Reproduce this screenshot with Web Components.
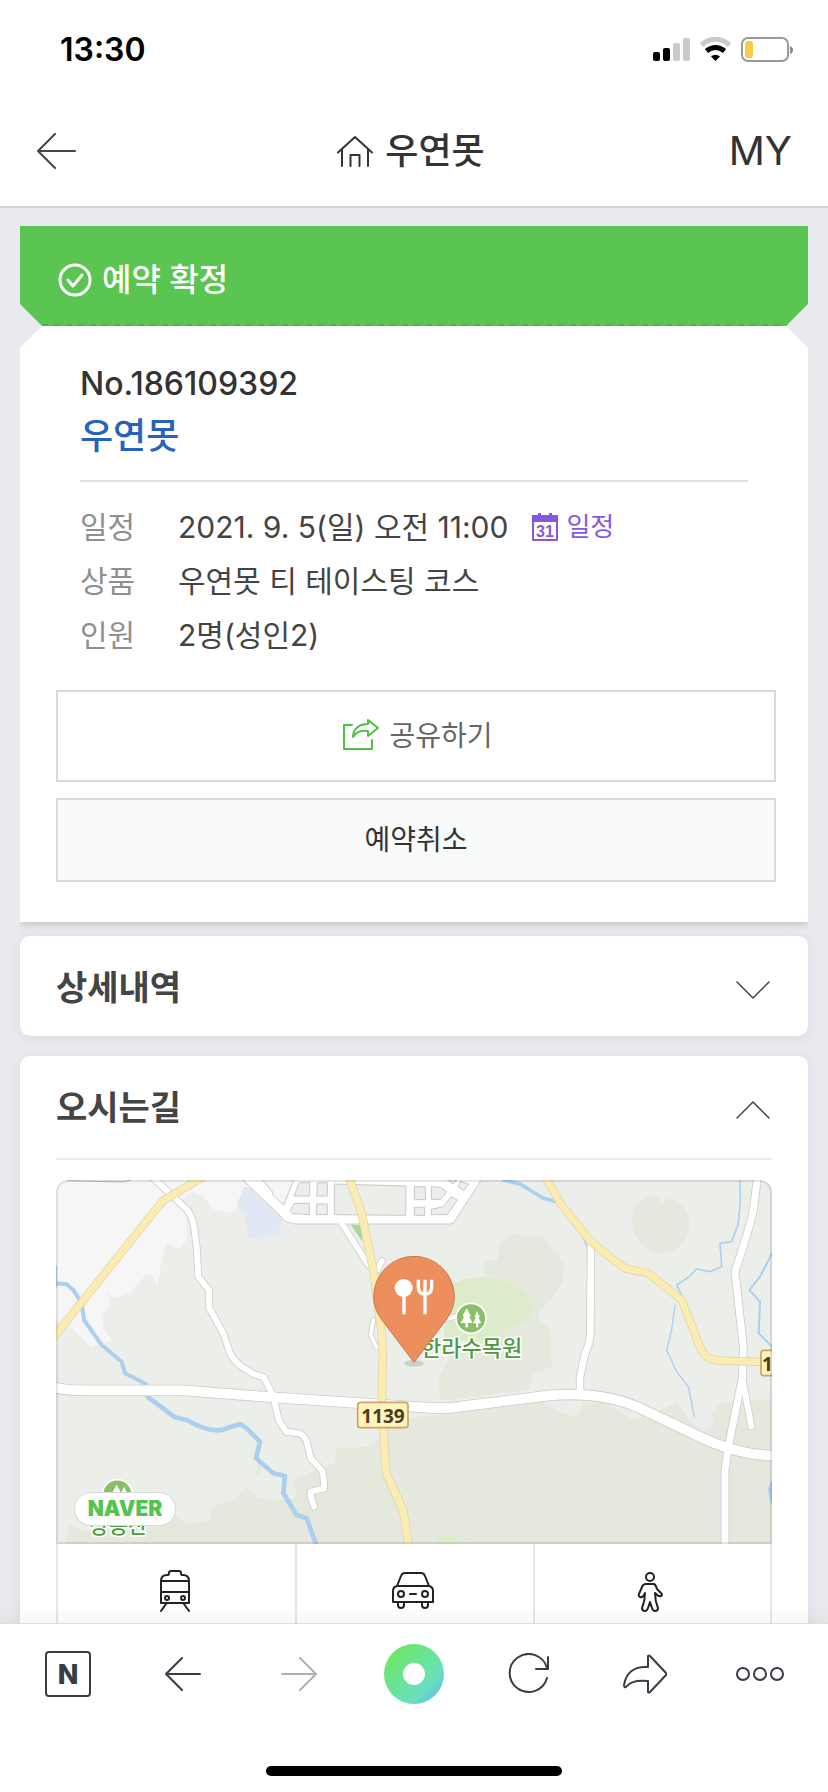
<!DOCTYPE html>
<html lang="ko">
<head>
<meta charset="utf-8">
<meta name="viewport" content="width=device-width, initial-scale=1">
<title>우연못 예약 확정</title>
<style>
  html, body {
    height: 100%;
    margin: 0;
  }

  body {
    background: #e9eaee;
    color: #333;
    font-family: Inter, "Noto Sans CJK KR", sans-serif;
  }
</style>
</head>
<body>
<booking-app>
  <status-bar slot="top" time="13:30"></status-bar>
  <page-header slot="top">우연못</page-header>

  <booking-ticket number="186109392">
    <span slot="status">예약 확정</span>
    <a slot="name" href="#place">우연못</a>
    <info-row label="일정">2021. 9. 5(일) 오전 11:00 <calendar-link slot="extra">일정</calendar-link></info-row>
    <info-row label="상품">우연못 티 테이스팅 코스</info-row>
    <info-row label="인원">2명(성인2)</info-row>
    <action-button slot="actions" icon="share">공유하기</action-button>
    <action-button slot="actions" muted>예약취소</action-button>
  </booking-ticket>

  <fold-card title-text="상세내역"></fold-card>
  <fold-card title-text="오시는길" opened>
    <place-map></place-map>
    <route-tabs></route-tabs>
  </fold-card>

  <browser-bar slot="bottom"></browser-bar>
</booking-app>

<script>
const ICONS = {
  arrow: ['0 0 40 36', '<path d="M39 18H2M19 1 2 18l17 17"/>'],
  home: ['0 0 36 32', '<path d="M1 17.500 18 2l17 15.500M5 14v17M31 14v17M13.500 31V20h9v11"/>'],
  check: ['0 0 34 34', '<g stroke-width="3"><circle cx="17" cy="17" r="15"/><path d="m10 17 5 6 9-11"/></g>'],
  calendar: ['0 0 26 28', '<path d="M1 3h24v24H1z"/><path d="M0 2h26v7H0zM6 0h3v3H6zM17 0h3v3h-3z" fill="currentColor" stroke="none"/><text x="13" y="24" text-anchor="middle" font-family="Liberation Sans" font-size="16" font-weight="700" fill="currentColor" stroke="none">31</text>'],
  share: ['0 0 36 32', '<path d="M9 7H1v24h28V22M25 2l10 8-10 8v-5c-7-1-12 1-15 6 0-7 5-13 15-13z"/>'],
  chevron: ['0 0 34 20', '<path d="m1 2 16 16L33 2" stroke-width="1.500"/>'],
  train: ['0 0 30 42', '<path d="M1 33V11q0-6 6-6h1q1 0 1-2t2-2h8q2 0 2 2t1 2h1q6 0 6 6v22zM1 11h28M1 22h28M6 34l-5 7M24 34l5 7"/><circle cx="7" cy="28" r="2"/><circle cx="23" cy="28" r="2"/>'],
  car: ['0 0 42 40', '<path d="M5 14 9 4q1-3 4-3h16q3 0 4 3l4 10q4 1 4 5v11H1V19q0-4 4-5zM5 14h32M18 22h6"/><circle cx="9" cy="22" r="3"/><circle cx="33" cy="22" r="3"/><path d="M6 31v2a3 3 0 0 0 6 0v-2M30 31v2a3 3 0 0 0 6 0v-2"/>'],
  walk: ['0 0 26 40', '<circle cx="13" cy="5" r="4"/><path d="M9 12h8q2 1 3 5l4 4q2 2 0 3-2 1-5-2l-1-1q0 8 3 15 0 3-3 3-2 0-3-3l-2-6-2 6q-1 3-3 3-3 0-3-3 3-7 3-15l-1 2q-2 3-4 2t-1-3l3-7q1-3 4-3z"/>'],
  naver: ['0 0 46 46', '<rect x="1" y="1" width="44" height="44" rx="3"/><text x="23" y="33" text-anchor="middle" font-size="27" font-weight="800" fill="currentColor" stroke="none">N</text>'],
  forward: ['0 0 36 36', '<path d="M1 18h33M19 2l16 16-16 16"/>'],
  back: ['0 0 36 36', '<path d="M35 18H2M17 2 1 18l16 16"/>'],
  reload: ['0 0 42 42', '<path d="M39 25A19 19 0 1 1 39 15M40 4v12H28"/>'],
  send: ['0 0 44 40', '<path d="M25 2q1-1 2 0l16 17q1 1 0 2L27 38q-1 1-2 0V27C15 26 8 27 4 32q-3 3-3-1C3 19 11 12 25 13z"/>'],
  more: ['0 0 50 16', '<circle cx="8" cy="8" r="6"/><circle cx="25" cy="8" r="6"/><circle cx="42" cy="8" r="6"/>']
};

// Map coordinates are three units per pixel.
const WATER = [
  ['M48 340 80 343 100 360 125 400 132 450 185 525 245 575 255 610 318 642', 12],
  ['M48 290V350', 6],
  ['M322 680 405 742 440 750Q520 795 560 775L600 762 620 775 660 815 648 865 700 910 735 918 730 970 770 1035 800 1045 828 1122', 14],
  ['M1390 30 1440 42 1510 85 1550 95', 11],
  ['M2100 30 2101 90 2095 160 2075 215 2040 220 2045 290 2010 305 1970 297 1948 320 1910 345 1925 375', 5],
  ['M1905 405 1895 480 1880 540 1910 605 1945 650 1963 740', 4],
  ['M2196 250 2160 320 2128 360 2160 395 2156 490 2196 530', 6],
  ['M1620 180 1640 230', 4],
  ['M2196 940 2190 960 2196 995', 12]
];

const ROADS = [
  ['M620 20 745 140', 28],
  ['M655 30 688 68', 16],
  ['M905 160 985 285M1012 300 1026 272', 17],
  ['M1000 450 992 495 1010 532', 12],
  ['M1200 450 1255 438', 14],
  ['M1653 215 1651 490Q1650 520 1635 550L1620 620V665', 20],
  ['M340 24 440 118Q455 135 462 170L470 230 475 320 507 360 508 415 550 490 570 550Q580 570 605 590L640 612 672 622 700 680 716 750 738 785 775 790Q790 792 800 815L812 865 845 900Q852 910 852 955L812 965V978L822 1010', 18],
  ['M2110 640 2134 770', 18],
  ['M2152 26 2140 120Q2130 170 2085 305L2110 530 2108 620 2065 830 2055 900V1130', 21],
  ['M40 652Q80 662 150 661L430 661 700 682 1150 712Q1210 718 1260 710L1530 676Q1680 664 1790 710L1990 805Q2060 838 2140 852L2206 858', 29]
];

const HIGHWAYS = [
  ['M485 24 375 88Q365 95 360 103L40 503', 20],
  ['M928 24 965 130 1000 300 1024 480Q1030 540 1027 600L1026 700 1038 910 1085 1010Q1095 1035 1105 1130', 21],
  ['M1515 20 1565 105 1640 200Q1660 225 1755 295L1825 310 1925 390 1980 530Q1995 570 2040 572L2175 576', 20]
];

const BLOCKS = [
  'M778 38H810L808 78H762z', 'M832 38H862V78H830z', 'M762 100H808V134L748 130z',
  'M830 102H862V134H828z', 'M883 42 1098 48 1097 136 883 134z', 'M1123 50H1156V89H1123z',
  'M1123 112H1154V136H1123z', 'M1174 50 1202 52 1220 66 1202 88H1174z',
  'M1174 134V118L1210 110 1234 80 1252 90 1222 134z', 'M1262 34 1286 42 1272 62 1255 50z',
  'M1222 30H1250L1240 42z'
];

const stroke = (list, color, extra = 0) => list
  .map(([d, width]) => `<path d="${d}" stroke="${color}" stroke-width="${width + extra}"/>`)
  .join('');

class AppIcon extends HTMLElement {
  constructor() {
    super();

    this.attachShadow({ mode: 'open' });
  }

  connectedCallback() {
    const [viewBox, shapes] = ICONS[this.getAttribute('name')];
    const [, , width, height] = viewBox.split(' ');

    this.shadowRoot.innerHTML = `
      <style>
        :host {
          display: block;
          flex: none;
        }

        svg {
          display: block;
          fill: none;
          font-family: Inter, sans-serif;
          stroke: currentColor;
          stroke-linecap: round;
          stroke-linejoin: round;
          stroke-width: 2;
        }
      </style>
      <svg viewBox="${viewBox}" width="${width}" height="${height}" aria-hidden="true">${shapes}</svg>
    `;
  }
}

class BookingApp extends HTMLElement {
  constructor() {
    super();

    this.attachShadow({ mode: 'open' }).innerHTML = `
      <style>
        :host {
          display: flex;
          flex-direction: column;
          height: 100vh;
        }

        main {
          display: flex;
          flex: 1;
          flex-direction: column;
          gap: 20px;
          min-height: 0;
          overflow-y: auto;
          padding: 18px 20px;
          scrollbar-width: none;
        }
      </style>
      <slot name="top"></slot>
      <main><slot></slot></main>
      <slot name="bottom"></slot>
    `;
  }
}

class StatusBar extends HTMLElement {
  constructor() {
    super();

    this.attachShadow({ mode: 'open' });
  }

  connectedCallback() {
    this.shadowRoot.innerHTML = `
      <style>
        :host {
          align-items: center;
          background: #fff;
          box-sizing: border-box;
          color: #000;
          display: flex;
          flex: none;
          height: 100px;
          justify-content: space-between;
          padding: 0 34px 0 60px;
        }

        time {
          font-size: 32px;
          font-weight: 600;
          line-height: 40px;
        }

        svg {
          display: block;
        }
      </style>
      <time>${this.getAttribute('time')}</time>
      <svg width="142" height="26" viewBox="0 0 142 26" aria-hidden="true">
        <rect x="1" y="15" width="7" height="9" rx="2"/>
        <rect x="11" y="11" width="7" height="13" rx="2"/>
        <rect x="21" y="6" width="7" height="18" rx="2" fill="#cacaca"/>
        <rect x="31" y="1" width="7" height="23" rx="2" fill="#cacaca"/>
        <path d="M49.500 8Q63.500-3.500 77.500 8" fill="none" stroke="#cacaca" stroke-width="5"/>
        <path d="M54.500 14Q63.500 7 72.500 14" fill="none" stroke="#000" stroke-width="5"/>
        <path d="M59 19.500Q63.500 16 68 19.500L63.500 24z"/>
        <rect x="90" y="1" width="46" height="23" rx="6" fill="none" stroke="#999" stroke-width="2"/>
        <rect x="93" y="4" width="8" height="17" rx="3" fill="#f8cd45"/>
        <path d="M138 9q3 1 3 4t-3 4z" fill="#888"/>
      </svg>
    `;
  }
}

class PageHeader extends HTMLElement {
  constructor() {
    super();

    this.attachShadow({ mode: 'open' }).innerHTML = `
      <style>
        :host {
          align-items: center;
          background: #fff;
          border-bottom: 2px solid #d2d3d7;
          box-sizing: border-box;
          display: grid;
          flex: none;
          grid-template-columns: 1fr auto 1fr;
          height: 108px;
          padding: 0 36px 4px;
        }

        button {
          background: none;
          border: 0;
          color: #444;
          justify-self: start;
          padding: 0;
        }

        h1 {
          align-items: center;
          display: flex;
          font-size: 36px;
          font-weight: 500;
          gap: 12px;
          line-height: 48px;
          margin: 0 6px 0 0;
        }

        a {
          color: #333;
          font-size: 40px;
          font-weight: 400;
          justify-self: end;
          line-height: 48px;
          text-decoration: none;
        }
      </style>
      <button type="button" aria-label="뒤로"><app-icon name="arrow"></app-icon></button>
      <h1><app-icon name="home"></app-icon><slot></slot></h1>
      <a href="#my">MY</a>
    `;
  }
}

class BookingTicket extends HTMLElement {
  constructor() {
    super();

    this.attachShadow({ mode: 'open' });
  }

  connectedCallback() {
    this.shadowRoot.innerHTML = `
      <style>
        :host {
          display: block;
          flex: none;
          margin-bottom: -6px;
        }

        #banner {
          align-items: center;
          background:
            repeating-linear-gradient(90deg, #52b04c 0 6px, transparent 6px 12px) 22px 100% / 100% 2px no-repeat,
            #5ac551;
          box-sizing: border-box;
          clip-path: polygon(0 0, 100% 0, 100% calc(100% - 22px), calc(100% - 22px) 100%, 22px 100%, 0 calc(100% - 22px));
          color: #fff;
          display: flex;
          font-size: 32px;
          font-weight: 500;
          gap: 10px;
          height: 100px;
          line-height: 48px;
          padding: 8px 38px 0;
        }

        #body {
          background: #fff;
          box-shadow: 0 2px 8px rgba(0, 0, 0, .18);
          clip-path: polygon(22px 0, calc(100% - 22px) 0, 100% 22px, 100% calc(100% + 12px), 0 calc(100% + 12px), 0 22px);
          padding: 32px 0 40px;
        }

        #summary {
          border-bottom: 2px solid #e0e0e0;
          line-height: 52px;
          margin: 0 60px 18px;
          padding-bottom: 18px;
        }

        #number {
          font-size: 32px;
          font-weight: 500;
          margin: 0;
        }

        #name {
          font-size: 36px;
          font-weight: 500;
          margin: 0;
        }

        ::slotted(a) {
          color: #2862bd;
          text-decoration: none;
        }

        #rows {
          margin: 0 60px;
        }

        #actions {
          display: flex;
          flex-direction: column;
          gap: 16px;
          margin: 28px 32px 0 36px;
        }
      </style>
      <div id="banner"><app-icon name="check"></app-icon><slot name="status"></slot></div>
      <div id="body">
        <div id="summary">
          <p id="number">No.${this.getAttribute('number')}</p>
          <h2 id="name"><slot name="name"></slot></h2>
        </div>
        <div id="rows"><slot></slot></div>
        <div id="actions"><slot name="actions"></slot></div>
      </div>
    `;
  }
}

class InfoRow extends HTMLElement {
  constructor() {
    super();

    this.attachShadow({ mode: 'open' });
  }

  connectedCallback() {
    this.shadowRoot.innerHTML = `
      <style>
        :host {
          color: #444;
          display: flex;
          font-size: 30px;
          line-height: 54px;
        }

        #label {
          color: #8f8f8f;
          flex: none;
          width: 98px;
        }

        #value {
          align-items: center;
          display: flex;
          gap: 24px;
        }
      </style>
      <span id="label">${this.getAttribute('label')}</span>
      <span id="value"><span><slot></slot></span><slot name="extra"></slot></span>
    `;
  }
}

class CalendarLink extends HTMLElement {
  constructor() {
    super();

    this.attachShadow({ mode: 'open' }).innerHTML = `
      <style>
        :host {
          display: block;
        }

        a {
          align-items: center;
          color: #8559df;
          display: flex;
          font-size: 26px;
          gap: 8px;
          text-decoration: none;
        }
      </style>
      <a href="#calendar"><app-icon name="calendar"></app-icon><slot></slot></a>
    `;
  }
}

class ActionButton extends HTMLElement {
  constructor() {
    super();

    this.attachShadow({ mode: 'open' });
  }

  connectedCallback() {
    const icon = this.getAttribute('icon');

    this.shadowRoot.innerHTML = `
      <style>
        :host {
          display: block;
        }

        button {
          align-items: center;
          background: #fff;
          border: 2px solid #d9dbdb;
          color: #666;
          display: flex;
          font: inherit;
          font-size: 28px;
          gap: 10px;
          height: 92px;
          justify-content: center;
          padding: 0 0 4px;
          width: 100%;
        }

        :host([icon]) button {
          padding-left: 4px;
        }

        :host([muted]) button {
          background: #f9fbfb;
          color: #333;
          height: 84px;
        }

        app-icon {
          color: #4fc043;
        }
      </style>
      <button type="button">${icon ? `<app-icon name="${icon}"></app-icon>` : ''}<slot></slot></button>
    `;
  }
}

class FoldCard extends HTMLElement {
  constructor() {
    super();

    this.attachShadow({ mode: 'open' });
  }

  connectedCallback() {
    this.shadowRoot.innerHTML = `
      <style>
        :host {
          background: #fff;
          border-radius: 10px;
          box-shadow: 0 2px 12px rgba(60, 60, 100, .07);
          display: block;
          flex: none;
          padding: 0 36px;
        }

        h2 {
          margin: 0;
        }

        button {
          align-items: center;
          background: none;
          border: 0;
          color: #444;
          display: flex;
          font: inherit;
          font-size: 34px;
          font-weight: 700;
          height: 100px;
          justify-content: space-between;
          line-height: 48px;
          padding: 4px 2px 0 0;
          width: 100%;
        }

        app-icon {
          padding-top: 4px;
        }

        #content {
          border-top: 2px solid #ebebeb;
          display: none;
          padding: 20px 0 36px;
        }

        :host([opened]) #content {
          display: block;
        }

        :host([opened]) h2 {
          padding-bottom: 2px;
        }

        :host([opened]) app-icon {
          padding: 0 0 4px;
          transform: rotate(180deg);
        }
      </style>
      <h2><button type="button" aria-expanded="${this.hasAttribute('opened')}">${this.getAttribute('title-text')}<app-icon name="chevron"></app-icon></button></h2>
      <div id="content"><slot></slot></div>
    `;

    this.shadowRoot.querySelector('button').addEventListener('click', this.toggle.bind(this));
  }

  toggle() {
    this.toggleAttribute('opened');
    this.shadowRoot.querySelector('button').setAttribute('aria-expanded', this.hasAttribute('opened'));
  }
}

class PlaceMap extends HTMLElement {
  constructor() {
    super();

    this.attachShadow({ mode: 'open' }).innerHTML = `
      <style>
        :host {
          aspect-ratio: 716 / 364;
          border-radius: 12px 12px 0 0;
          display: block;
          overflow: hidden;
          position: relative;
        }

        :host::after {
          border: 2px solid rgba(0, 0, 0, .1);
          border-radius: 12px 12px 0 0;
          content: '';
          inset: 0;
          pointer-events: none;
          position: absolute;
        }

        svg {
          display: block;
          height: 100%;
          width: 100%;
        }

        .label {
          fill: #4f9a40;
          font-family: "Noto Sans CJK KR", sans-serif;
          font-weight: 500;
          paint-order: stroke;
          stroke: #fff;
          stroke-width: 9px;
        }

        .shield {
          fill: #4e3c1a;
          font-family: "Open Sans", sans-serif;
          font-size: 57px;
          font-weight: 700;
        }

        #logo {
          background: #fff;
          border: 1px solid #d8d8d8;
          border-radius: 17px;
          bottom: 18px;
          box-sizing: border-box;
          color: #53c351;
          font-size: 21px;
          font-weight: 900;
          left: 18px;
          line-height: 32px;
          position: absolute;
          text-align: center;
          width: 102px;
        }
      </style>
      <svg viewBox="48 30 2148 1092" preserveAspectRatio="xMidYMid slice" role="img" aria-label="지도">
        <rect x="48" y="30" width="2148" height="1092" fill="#eceee9"/>
        <path fill="#f6f6f6" d="M48 30H760L720 110 600 100 570 130 520 118 485 75 455 65 425 92 440 150V210L420 237 378 220 365 270 352 352 335 315 318 314 270 370 225 385 200 370 210 400 188 440 190 475 215 510 155 532 95 475 48 450z"/>
        <path fill="#e0e8f3" d="M612 50 590 105 612 125 625 200 665 210 685 192 715 197 728 140 640 55z"/>
        <g fill="#e5e8dd">
          <path d="M75 1122 90 1065 140 1085 230 1055 400 1032 440 1062 510 1050 520 1010 580 990 620 950 650 980 700 992 770 985 760 930 850 890 885 880 890 835 1000 830 1030 780 1110 745 1500 690 1545 720 1610 745 1630 700 1700 700 1780 750 1910 700 1940 740 1990 790 2020 760 2016 730 2040 700 2196 686V1122z"/>
          <path d="M1380 218 1425 188 1440 200 1510 200 1540 240 1572 280 1568 340 1490 440 1532 480 1535 590 1480 610 1465 660 1200 692 1195 620 1230 560 1360 500 1360 320 1330 308 1335 272 1372 270z"/>
          <path d="M1778 125C1785 95 1820 75 1856 80L1862 105 1885 85C1940 90 1965 160 1935 210 1900 260 1850 255 1820 235 1780 205 1772 165 1778 125z"/>
          <path d="M650 860 665 900 650 920z"/>
        </g>
        <path fill="#dcebc9" d="M1225 350C1290 305 1410 310 1462 380L1478 415 1465 450 1400 480 1350 512H1210z"/>
        <path fill="#d9edc4" d="M1182 1122 1195 1105 1230 1097 1262 1115 1285 1122z"/>
        <path fill="#a9d79b" d="M932 164 962 166 968 215z"/>
        <path d="M80 32 250 36 275 29" fill="none" stroke="#bbb" stroke-width="3"/>
        <g fill="none" stroke-linecap="round" stroke-linejoin="round">
          ${stroke(WATER, '#abcfef')}
          ${stroke(ROADS, '#cdcdcd', 5)}
        </g>
        <path d="M725 122 765 20H1330L1245 152Q1240 162 1230 162H765Q740 158 725 148z" fill="#fff" stroke="#cdcdcd" stroke-width="3"/>
        <path d="${BLOCKS.join('')}" fill="#eceee9" stroke="#c8c8c8" stroke-width="3"/>
        <g fill="none" stroke-linecap="round" stroke-linejoin="round">
          ${stroke(ROADS, '#fff')}
          ${stroke(HIGHWAYS, '#e3d6a8', 5)}
          ${stroke(HIGHWAYS, '#faecb3')}
        </g>

        <rect x="953" y="697" width="151" height="76" rx="9" fill="#fdf3bd" stroke="#cda463" stroke-width="5"/>
        <text class="shield" x="1029" y="758" text-anchor="middle">1139</text>
        <rect x="2163" y="541" width="151" height="76" rx="9" fill="#fdf3bd" stroke="#cda463" stroke-width="5"/>
        <text class="shield" x="2166" y="602">1</text>

        <circle cx="1293" cy="445" r="45" fill="#89bf66" stroke="#fff" stroke-width="5"/>
        <path fill="#fff" d="m1280 415 13 24h-6l11 20h-14v13h-8v-13h-14l11-20h-6zM1311 424l9 18h-5l9 18h-9v12h-7v-12h-9l9-18h-5z"/>
        <text class="label" x="1143" y="559" font-size="66">한라수목원</text>
        <circle cx="232" cy="974" r="45" fill="#89bf66" stroke="#fff" stroke-width="5"/>
        <path fill="#fff" d="m230 944 22 40h-44zM252 950l16 30h-30z"/>
        <text class="label" x="235" y="1090" font-size="63" text-anchor="middle">상봉산</text>

        <ellipse cx="1122" cy="580" rx="30" ry="10" fill="#000" opacity=".13"/>
        <path d="M1122 577 1026 450C1010 428 1001 405 1001 380A121 121 0 0 1 1243 380C1243 405 1234 428 1218 450z" fill="#ed8f5d" stroke="#c9764a" stroke-width="3"/>
        <circle cx="1091" cy="354" r="27" fill="#fff"/>
        <path d="M1092 370V433M1155 329V433M1135 329V350Q1135 372 1155 372T1175 350V329" fill="none" stroke="#fff" stroke-width="10"/>
      </svg>
      <span id="logo">NAVER</span>
    `;
  }
}

class RouteTabs extends HTMLElement {
  constructor() {
    super();

    this.attachShadow({ mode: 'open' }).innerHTML = `
      <style>
        :host {
          border: solid #e6e6e6;
          border-width: 0 2px 2px;
          display: grid;
          grid-template-columns: repeat(3, 1fr);
        }

        button {
          align-items: end;
          background: #fff;
          border: 0;
          border-left: 2px solid #e6e6e6;
          color: #222;
          display: flex;
          height: 92px;
          justify-content: center;
          padding: 0 4px 24px 0;
        }

        button:first-of-type {
          border-left: 0;
        }
      </style>
      <button type="button" aria-label="대중교통"><app-icon name="train"></app-icon></button>
      <button type="button" aria-label="자동차"><app-icon name="car"></app-icon></button>
      <button type="button" aria-label="도보"><app-icon name="walk"></app-icon></button>
    `;
  }
}

class BrowserBar extends HTMLElement {
  constructor() {
    super();

    this.attachShadow({ mode: 'open' }).innerHTML = `
      <style>
        :host {
          background: #fff;
          border-top: 1px solid #dcdfe2;
          box-shadow: 0 -2px 20px rgba(40, 60, 60, .08);
          display: block;
          flex: none;
          padding: 0 10px 16px;
          position: relative;
        }

        nav {
          display: grid;
          grid-template-columns: repeat(7, 1fr);
          height: 100px;
        }

        button {
          align-items: center;
          background: none;
          border: 0;
          color: #363d45;
          display: flex;
          justify-content: center;
          padding: 0;
        }

        button:disabled {
          color: #b0b0b0;
        }

        #dot {
          background: linear-gradient(135deg, #6be66f 20%, #6ae0bd 70%, #5ac0ec 95%);
          border: 0;
          border-radius: 50%;
          display: grid;
          height: 60px;
          place-items: center;
          width: 60px;
        }

        #dot::before {
          background: #fff;
          border-radius: 50%;
          content: '';
          height: 22px;
          width: 22px;
        }

        #indicator {
          background: #000;
          border-radius: 5px;
          height: 10px;
          margin: 42px auto 0;
          width: 296px;
        }
      </style>
      <nav>
        <button type="button" aria-label="네이버 홈"><app-icon name="naver"></app-icon></button>
        <button type="button" aria-label="이전"><app-icon name="back"></app-icon></button>
        <button type="button" aria-label="다음" disabled><app-icon name="forward"></app-icon></button>
        <button type="button" aria-label="그린닷"><span id="dot"></span></button>
        <button type="button" aria-label="새로고침"><app-icon name="reload"></app-icon></button>
        <button type="button" aria-label="공유"><app-icon name="send"></app-icon></button>
        <button type="button" aria-label="더보기"><app-icon name="more"></app-icon></button>
      </nav>
      <div id="indicator"></div>
    `;
  }
}

customElements.define('app-icon', AppIcon);
customElements.define('booking-app', BookingApp);
customElements.define('status-bar', StatusBar);
customElements.define('page-header', PageHeader);
customElements.define('booking-ticket', BookingTicket);
customElements.define('info-row', InfoRow);
customElements.define('calendar-link', CalendarLink);
customElements.define('action-button', ActionButton);
customElements.define('fold-card', FoldCard);
customElements.define('place-map', PlaceMap);
customElements.define('route-tabs', RouteTabs);
customElements.define('browser-bar', BrowserBar);
</script>
</body>
</html>
